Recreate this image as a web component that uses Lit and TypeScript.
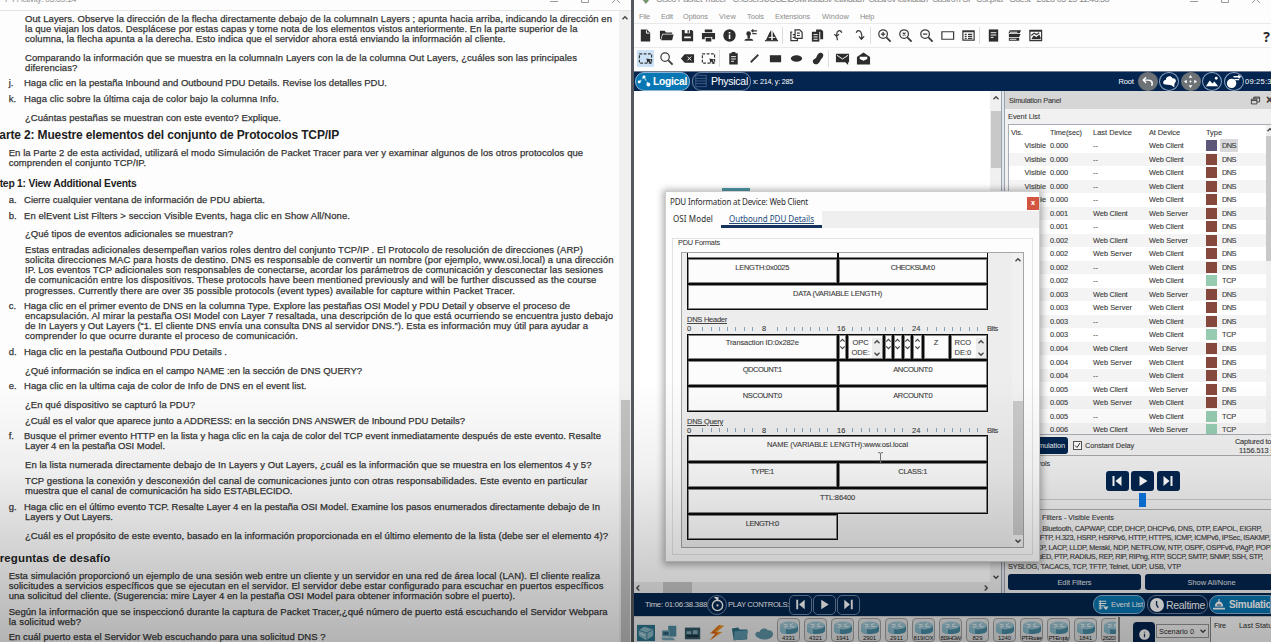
import { LitElement, html, svg, css, nothing } from "lit";
import { customElement, property } from "lit/decorators.js";

/** Single line of text tracked out (or in) to an exact pixel width. */
@customElement("fit-text")
class FitText extends LitElement {
  @property({ type: Number }) w = 0;
  @property() t = "";
  static styles = css`
    :host { display: inline-block; white-space: pre; flex: none; text-decoration: inherit; }
    span { display: inline-block; white-space: pre; text-decoration: inherit; }
  `;
  firstUpdated() {
    const s = this.renderRoot.querySelector("span") as HTMLElement;
    const n = s.getBoundingClientRect().width;
    if (this.w && n) s.style.letterSpacing = (this.w - n) / this.t.length + "px";
  }
  render() { return html`<span>${this.t}</span>`; }
}

const T = (t: string, w: number) => html`<fit-text .t=${t} .w=${w}></fit-text>`;

type Line = { y: number; w: number; t: string; k?: string; l?: string };
const LINES: Line[] = [
  { y: 18.5, w: 587, t: "Out Layers. Observe la dirección de la flecha directamente debajo de la columnaIn Layers ; apunta hacia arriba, indicando la dirección en" },
  { y: 28.7, w: 552.5, t: "la que viajan los datos. Desplácese por estas capas y tome nota de los elementos vistos anteriormente. En la parte superior de la" },
  { y: 38.8, w: 480.5, t: "columna, la flecha apunta a la derecha. Esto indica que el servidor ahora está enviando la información al cliente." },
  { y: 57.7, w: 552, t: "Comparando la información que se muestra en la columnaIn Layers con la de la columna Out Layers, ¿cuáles son las principales" },
  { y: 67.7, w: 52.5, t: "diferencias?" },
  { y: 83.3, w: 363, t: "Haga clic en la pestaña Inbound and Outbound PDU Details. Revise los detalles PDU.", l: "j." },
  { y: 98.8, w: 255, t: "Haga clic sobre la última caja de color bajo la columna Info.", l: "k." },
  { y: 117.6, w: 256, t: "¿Cuántas pestañas se muestran con este evento? Explique." },
  { y: 135, w: 347.5, t: "Parte 2: Muestre elementos del conjunto de Protocolos TCP/IP", k: "h1" },
  { y: 153, w: 574.5, t: "En la Parte 2 de esta actividad, utilizará el modo Simulación de Packet Tracer para ver y examinar algunos de los otros protocolos que", k: "p" },
  { y: 163, w: 137.5, t: "comprenden el conjunto TCP/IP.", k: "p" },
  { y: 184, w: 143.5, t: "Step 1: View Additional Events", k: "h2" },
  { y: 200, w: 241, t: "Cierre cualquier ventana de información de PDU abierta.", l: "a." },
  { y: 215.7, w: 326, t: "En elEvent List Filters > seccion Visible Events, haga clic en Show All/None.", l: "b." },
  { y: 234.5, w: 208, t: "¿Qué tipos de eventos adicionales se muestran?" },
  { y: 249.8, w: 558, t: "Estas entradas adicionales desempeñan varios roles dentro del conjunto TCP/IP . El Protocolo de resolución de direcciones (ARP)" },
  { y: 260, w: 588.5, t: "solicita direcciones MAC para hosts de destino. DNS es responsable de convertir un nombre (por ejemplo, www.osi.local) a una dirección" },
  { y: 270.3, w: 578, t: "IP. Los eventos TCP adicionales son responsables de conectarse, acordar los parámetros de comunicación y desconectar las sesiones" },
  { y: 280.5, w: 571.5, t: "de comunicación entre los dispositivos. These protocols have been mentioned previously and will be further discussed as the course" },
  { y: 290.6, w: 490, t: "progresses. Currently there are over 35 possible protocols (event types) available for capture within Packet Tracer." },
  { y: 306, w: 546, t: "Haga clic en el primer evento de DNS en la columna Type. Explore las pestañas OSI Model y PDU Detail y observe el proceso de", l: "c." },
  { y: 316, w: 588, t: "encapsulación. Al mirar la pestaña OSI Model con Layer 7 resaltada, una descripción de lo que está ocurriendo se encuentra justo debajo" },
  { y: 326.3, w: 563, t: "de In Layers y Out Layers (“1. El cliente DNS envía una consulta DNS al servidor DNS.”). Esta es información muy útil para ayudar a" },
  { y: 336.5, w: 273, t: "comprender lo que ocurre durante el proceso de comunicación." },
  { y: 352, w: 203, t: "Haga clic en la pestaña Outbound PDU Details .", l: "d." },
  { y: 370.7, w: 337, t: "¿Qué información se indica en el campo NAME :en la sección de DNS QUERY?" },
  { y: 386.5, w: 282.5, t: "Haga clic en la ultima caja de color de Info de DNS en el event list.", l: "e." },
  { y: 405.3, w: 170, t: "¿En qué dispositivo se capturó la PDU?" },
  { y: 421, w: 440, t: "¿Cuál es el valor que aparece junto a ADDRESS: en la sección DNS ANSWER de Inbound PDU Details?" },
  { y: 436.5, w: 577, t: "Busque el primer evento HTTP en la lista y haga clic en la caja de color del TCP event inmediatamente después de este evento. Resalte", l: "f." },
  { y: 446.6, w: 140, t: "Layer 4 en la pestaña OSI Model." },
  { y: 465.5, w: 566.5, t: "En la lista numerada directamente debajo de In Layers y Out Layers, ¿cuál es la información que se muestra en los elementos 4 y 5?" },
  { y: 481, w: 562.5, t: "TCP gestiona la conexión y desconexión del canal de comunicaciones junto con otras responsabilidades. Este evento en particular" },
  { y: 491.3, w: 267.5, t: "muestra que el canal de comunicación ha sido ESTABLECIDO." },
  { y: 506.7, w: 576, t: "Haga clic en el último evento TCP. Resalte Layer 4 en la pestaña OSI Model. Examine los pasos enumerados directamente debajo de In", l: "g." },
  { y: 516.9, w: 88, t: "Layers y Out Layers." },
  { y: 535.7, w: 583, t: "¿Cuál es el propósito de este evento, basado en la información proporcionada en el último elemento de la lista (debe ser el elemento 4)?" },
  { y: 558.2, w: 118.5, t: "Preguntas de desafío", k: "h3" },
  { y: 576, w: 591.5, t: "Esta simulación proporcionó un ejemplo de una sesión web entre un cliente y un servidor en una red de área local (LAN). El cliente realiza", k: "p" },
  { y: 586.3, w: 594.8, t: "solicitudes a servicios específicos que se ejecutan en el servidor. El servidor debe estar configurado para escuchar en puertos específicos", k: "p" },
  { y: 596.3, w: 506.5, t: "una solicitud del cliente. (Sugerencia: mire Layer 4 en la pestaña OSI Model para obtener información sobre el puerto).", k: "p" },
  { y: 611.9, w: 599, t: "Según la información que se inspeccionó durante la captura de Packet Tracer,¿qué número de puerto está escuchando el Servidor Webpara", k: "p" },
  { y: 622, w: 72.5, t: "la solicitud web?", k: "p" },
  { y: 637.3, w: 317, t: "En cuál puerto esta el Servidor Web escuchando para una solicitud DNS ?", k: "p" },
];

const EVENTS: [string, string, string, string][] = [
  ["0.000", "", "C", "DNS"], ["0.000", "", "C", "DNS"], ["0.000", "", "C", "DNS"], ["0.000", "", "C", "DNS"], ["0.000", "", "C", "DNS"],
  ["0.001", "C", "S", "DNS"], ["0.001", "", "C", "DNS"],
  ["0.002", "C", "S", "DNS"], ["0.002", "S", "C", "DNS"], ["0.002", "", "C", "DNS"], ["0.002", "", "C", "TCP"],
  ["0.003", "C", "S", "DNS"], ["0.003", "S", "C", "DNS"], ["0.003", "", "C", "DNS"], ["0.003", "", "C", "TCP"],
  ["0.004", "C", "S", "DNS"], ["0.004", "S", "C", "DNS"], ["0.004", "", "C", "DNS"],
  ["0.005", "C", "S", "DNS"], ["0.005", "S", "C", "DNS"], ["0.005", "", "C", "TCP"], ["0.006", "C", "S", "TCP"],
];
const dev = (d: string) => (d === "C" ? T("Web Client", 34.5) : d === "S" ? T("Web Server", 39) : "--");

const ICONS: Record<string, unknown> = {
  file: svg`<path class="f" d="M3 1.5h6.500l3.500 3.500v9.500H3z"/><path class="w" d="M9 2.500v3h3.200"/>`,
  open: svg`<path class="f" d="M1 3h5l1.500 1.800H14V6H3.500L1.800 12H1zM4 6.800h11.500L14 13H2.200z"/>`,
  save: svg`<path class="f" d="M2 2h10.500L14 3.500V14H2z"/><path class="wf" d="M5 2h5.500v3.600H5zM4.500 9h7v2h-7z"/><path class="f" d="M8 2.300h1.500v2.700H8z"/>`,
  print: svg`<path class="f" d="M4 1.500h8v3H4zM1 5.300h14V12h-3V9.500H4V12H1zM5 10.500h6V14.500H5z"/>`,
  info: svg`<circle class="f" cx="8" cy="8" r="6.600"/><path class="wf" d="M7.200 7h1.700v4.600H7.200zM7.200 4.200h1.700v1.700H7.200z"/>`,
  user: svg`<circle class="f" cx="6" cy="6" r="2.500"/><path class="f" d="M1.500 13.500c0-3 9.500-3 9.500 0zM4.800 8h2.600v3H4.800z"/><path class="s" d="M9 3h6M10 6h4.500M11 1.500L9.300 3 11 4.500"/>`,
  wiz: svg`<path class="f" d="M2 13L6 4.500 8 2v11zM9 13V3l4 7 1.500 3z"/><path class="w" d="M8.500 2v11M5 10h7"/><path class="s" d="M1 13.500h14"/>`,
  copy: svg`<path class="s" d="M6.500 2h5l2.500 2.500V11H6.500zM3.500 4.500H2V13.500h7V11M8.500 5.500h3M8.500 8h3M4 7h2M4 10h2"/>`,
  paste: svg`<path class="f" d="M6.500 1.500h5.500l2 2V12H6.500z"/><path class="f" d="M2 4h8v10.500H2z"/><path class="w" d="M3.700 7h4.500M3.700 9.500h4.500M3.700 12h4.500M10.400 4v8"/>`,
  undo: svg`<path class="s" d="M7 14C5.500 10 5.500 5 8 4c2-.6 3 .5 3.500 2M3.500 7.500L6 10l2.500-2.500" transform="translate(0 -1)"/>`,
  redo: svg`<path class="s" d="M10 12C11 9 10.500 4 8 3c-2-.6-3 .5-3.500 2M7.500 9L10 12l3-3"/>`,
  zin: svg`<circle class="s" cx="6.500" cy="6.500" r="4.600"/><path class="s b" d="M10 10l4.500 4.500"/><path class="s" d="M4.200 6.500h4.600M6.500 4.200v4.600"/>`,
  zone: svg`<circle class="s" cx="6.500" cy="6.500" r="4.600"/><path class="s b" d="M10 10l4.500 4.500"/><path class="s" d="M5 5l3 3M8 5L5 8"/>`,
  zout: svg`<circle class="s" cx="6.500" cy="6.500" r="4.600"/><path class="s b" d="M10 10l4.500 4.500"/><path class="s" d="M4.200 6.500h4.600"/>`,
  rect: svg`<path class="s" d="M2 4h12.500v8H2z"/>`,
  panel: svg`<path class="s" d="M2 3h12v10H2zM2 4h12M4 6.800h2M4 9h2M4 11h2M7.500 6.800H12M7.500 9H12M7.500 11H12"/>`,
  note: svg`<path class="f" d="M3 1.500h10v13H3z"/><path class="w" d="M5 5h6M5 7.500h6M5 10h3"/>`,
  stack: svg`<path class="f" d="M3 2.500h12l-1.500 3h-12zM2 6.500h12.500l-1.500 3H2zM2 10.500h11v3H2z"/><path class="w" d="M3 4.500h8M3 12h7"/>`,
  picture: svg`<path class="s" d="M2 2.500h12.500v11H2z"/><path class="f" d="M3.500 12l2.500-4 3 1.500 3-2.500 1.500 3v2zM2 2h12v2H2z"/><path class="s" d="M3.500 8l3-2.500L9 7l3-2"/>`,
  sel: svg`<path class="s d" d="M1.500 3h13v10h-13z"/><path class="f" d="M9 8l5.500 1-2 1.300 2 2.200-1 1-2.200-2.200L10 13z"/>`,
  mag: svg`<circle class="s" cx="6.500" cy="6.500" r="4.500"/><path class="s b" d="M10 10l4.500 4.500"/>`,
  del: svg`<path class="f" d="M1 8l4-4.500h10v9H5z"/><path class="w" d="M8 6l4 4M12 6l-4 4"/>`,
  clip: svg`<path class="f" d="M3.500 2.500h9v12h-9zM6 1h4v2H6z"/><path class="w" d="M5.500 6h5M5.500 8.500h5M5.500 11h3"/>`,
  line: svg`<path class="s b" d="M4 12l8-8"/>`,
  box: svg`<path class="f" d="M2 4.500h12v7.500H2z"/>`,
  oval: svg`<ellipse class="f" cx="8" cy="8" rx="6" ry="3.500"/>`,
  free: svg`<path class="f" d="M3 11c0-3 3-2 4-5s3-5 5.500-4 2 4 0 6-2 5-5 6-4.500-1-4.500-3z"/>`,
  mail: svg`<path class="f" d="M1 3h14v9h-1v3l-3-3H1z"/><path class="w" d="M2 4.500l6 4 6-4"/>`,
  omail: svg`<path class="f" d="M1 6.500L8 1.500l7 5v8H1z"/><path class="wf" d="M4 6h8v2.500L8 10.500 4 8.500z"/>`,
  win: svg`<path class="s" d="M2 6h8v7H2zM2 8h8M5.500 6V3H14v7h-4M5.500 4.500H14"/>`,
  prev: svg`<path class="h" d="M3.500 3h2v10h-2zM12.500 3v10L6.500 8z"/>`,
  play: svg`<path class="h" d="M4.500 3v10L12.500 8z"/>`,
  next: svg`<path class="h" d="M10.500 3h2v10h-2zM3.500 3v10L9.500 8z"/>`,
  back: svg`<path class="o" d="M12.500 12.500c2-5-2-6-4-6H3.500M6.500 3.500l-3 3 3 3"/>`,
  cloud: svg`<path class="h" d="M2 11c-2-3 1-5 2-4.500C4 2 10 1 11 4.500c4-.5 5 4 2.500 5L13 14l-3-2z"/>`,
  move: svg`<path class="h" d="M8 1l2 3H6zM8 15l2-3H6zM1 8l3-2v4zM15 8l-3-2v4z"/><circle class="h" cx="8" cy="8" r="1"/>`,
  mount: svg`<path class="h" d="M1 13l4-6 3 3 2-2 4 5z"/><circle class="h" cx="12" cy="4.500" r="1.500"/>`,
  globe: svg`<circle class="h" cx="6" cy="10" r="5"/><path class="o" d="M8 3h7M9 6h5M13 1.500L15 3l-1.500 1.500"/>`,
  nodes: svg`<circle class="h" cx="2.500" cy="9" r="1.700"/><circle class="h" cx="8" cy="3.500" r="1.700"/><circle class="h" cx="13" cy="12" r="2.200"/><path class="o d" stroke-opacity=".6" d="M3 9l5-5.500 5 8.500"/>`,
  rack: svg`<path class="r" d="M2 1.500h12v13H2zM2 5h12M2 8h12M2 11h12"/>`,
  timer: svg`<circle class="o" cx="8" cy="9" r="5.500"/><circle class="h" cx="8" cy="9" r="1.200"/><path class="h" d="M4 0h5v5z"/>`,
  list: svg`<path class="o" d="M1 3h10M1 6h10M1 9h8M1 12h5M3 2v12"/><path class="h" d="M7 10h7l-2.500 4h-2z"/>`,
  clock: svg`<circle class="h" cx="8" cy="8" r="8"/><path class="n" d="M7.500 3.500V8l2 3"/>`,
  sim: svg`<path class="h" d="M2.500 10c0-9 11-9 11 0zM0 11.500h16V14H0z"/><path class="o" d="M8 0v4"/><path class="n" d="M5.500 8h5"/>`,
  dinfo: svg`<circle class="h" cx="8" cy="8" r="6.500"/><path class="n" d="M8 4.500v1M8 7v4.500"/>`,
};
const ic = (n: string, c = "") => html`<svg class="ic ${c}" viewBox="0 0 16 16">${ICONS[n]}</svg>`;

const chev = (d: string) => html`<svg class="chev ${d}" viewBox="0 0 8 8"><path d="M1.500 5.300L4 2.700l2.500 2.600"/></svg>`;

const router = html`<svg class="router" viewBox="0 0 20 14">
  <path d="M1 4.500v5c0 4.800 18 4.800 18 0v-5z" fill="#4a8fa9"/>
  <path d="M1 4.500v5c0 2 3 3.300 6 3.600V6z" fill="#8cc0d1"/>
  <ellipse cx="10" cy="4.500" rx="9" ry="3.900" fill="#9cc6d4"/>
  <path d="M4.500 3l4 1M11 5l4.500 1M11 4l3-1.500M5 6.300l3.500-1.200" stroke="#eef7fa" stroke-width="1" fill="none"/></svg>`;
const ROUTERS = ["4331", "4321", "1941", "2901", "2911", "819IOX", "819HGW", "829", "1240", "PT-Router", "PT-Empty", "1841", "2620XM"];

const CATS = [
  svg`<path d="M0 0h20v18H0z" fill="#2f7690"/><path d="M2 6l6-4 10 3v7l-8 5-8-5z" fill="#8dbdcb"/><path d="M2 6l9 3 7-4M11 9v8" stroke="#3d7f97" fill="none"/><path d="M3 9l6 3" stroke="#d6eaf0"/>`,
  svg`<path d="M8 1h9v12H8z" fill="#4e8ea4"/><path d="M1 6h9v7H1zM0 14h13l3 3H2z" fill="#76a9ba"/><path d="M2.500 7.500h6v4h-6z" fill="#2e667c"/>`,
  svg`<path d="M1 3h17v13H1z" fill="#315b6b"/><path d="M3 7h5v3H3zM10 6h5v4h-5z" fill="#86adb9"/><path d="M3 12.500h13" stroke="#19323c" stroke-width="2"/>`,
  svg`<path d="M12 0L2 9.500l6 .3L1 18l15-10-6-.5L18 1z" fill="#f0941e"/><path d="M13 1L5 8.500l5 .6L5 15" stroke="#e0402b" fill="none"/>`,
  svg`<path d="M1 4l7-1 1.500 2H18v11L3 17z" fill="#2f7188"/><path d="M4 7l15-1-2 10-14 1z" fill="#5e9bb0"/>`,
  svg`<path d="M3 14c-5-2-2-8 2-6 1-5 8-5 9-2 6-1 8 5 4 8-4 3-11 3-15 0z" fill="#5f97ab"/>`,
];

const ruler = html`<div class="ruler">${[0, 8, 16, 24].map((n) => html`<div class="oct"><b>${n}</b>${[1, 2, 3, 4, 5, 6, 7].map(() => html`<i></i>`)}</div>`)}<span>${T("Bits", 11)}</span></div>`;
const spin = html`<span class="spin">${chev("up")}${chev("dn")}</span>`;
const two = (a: string, wa: number, b: string, wb: number) => html`<div class="prow two"><div>${T(a, wa)}</div><div>${T(b, wb)}</div></div>`;
const one = (a: string, w: number) => html`<div class="prow"><div>${T(a, w)}</div></div>`;

@customElement("app-root")
class AppRoot extends LitElement {
  static styles = css`
    :host { display: block; width: 1271px; height: 642px; position: relative; overflow: hidden; background: #fdfdfd;
      font-family: "Liberation Sans", Arial, sans-serif; color: #2c2c2c; }
    * { box-sizing: border-box; }
    .frame { display: grid; grid-template-columns: 631px 640px; height: 642px; }
    .shade { position: absolute; inset: 0; pointer-events: none;
      background: linear-gradient(to bottom, rgba(0,0,0,0) 380px, rgba(0,0,0,.06) 470px, rgba(0,0,0,.18) 560px, rgba(0,0,0,.29) 642px); }
    .ic { width: 16px; height: 16px; flex: none; display: block; overflow: visible; }
    .f { fill: #2d2d2d; } .s { fill: none; stroke: #383838; stroke-width: 1.3; } .b { stroke-width: 1.9; } .d { stroke-dasharray: 3 1.600; }
    .w { fill: none; stroke: #fff; stroke-width: 1; } .wf { fill: #fff; }
    .h { fill: #fff; } .o { fill: none; stroke: #fff; stroke-width: 1.500; } .n { stroke: #17365e; fill: none; stroke-width: 1.600; } .r { stroke: #42618c; fill: none; stroke-width: 1; }
    .chev { width: 8px; height: 8px; display: block; flex: none; } .chev path { fill: none; stroke: #444; stroke-width: 1.3; }
    .dn { transform: rotate(180deg); } .lt { transform: rotate(-90deg); } .rt { transform: rotate(90deg); }

    .doc { display: grid; grid-template-rows: 11px 1fr; height: 642px; overflow: hidden; }
    .dtitle { border-bottom: 1px solid #e4e4e4; display: flex; justify-content: space-between; overflow: hidden; height: 11px;
      font-size: 9px; line-height: 9px; color: #989898; padding-left: 5px; }
    .dtitle fit-text { margin-top: -5px; }
    .wbtn { display: flex; gap: 23px; margin-top: -5px; padding-right: 11px; }
    .wbtn svg { width: 8px; height: 8px; fill: none; stroke: #9a9a9a; }
    .dbody { display: grid; grid-template-columns: 619px 12px; overflow: hidden; height: 631px; }
    .text { overflow: hidden; font-size: 9.500px; -webkit-text-stroke: .25px #383838; padding-top: 2.500px; color: #333; }
    .ln { height: 10px; line-height: 10px; white-space: pre; padding-left: 25px; display: flex; }
    .ln.p { padding-left: 8.700px; } .ln.li { padding-left: 8.700px; }
    .ln .lab { width: 15.300px; flex: none; }
    .ln.h1 { padding-left: 0; margin-left: -8.500px; font-weight: bold; font-size: 12px; -webkit-text-stroke: 0; color: #1e1e1e; }
    .ln.h2 { padding-left: 0; margin-left: -7px; font-weight: bold; font-size: 10.300px; -webkit-text-stroke: 0; color: #1e1e1e; }
    .ln.h3 { padding-left: 0; margin-left: -8px; font-weight: bold; font-size: 11.500px; -webkit-text-stroke: 0; color: #222; }
    .dscroll { background: #f0f0f0; display: flex; flex-direction: column; justify-content: space-between; align-items: center; padding-top: 3px; }
    .dscroll i { width: 9px; height: 242px; background: #c2c2c2; }

    .pt { display: grid; grid-template-rows: 11px 12px 24px 23.500px 20.500px 502px 23px 26px; border-left: 3px solid #55585e; height: 642px; overflow: hidden; width: 640px; }
    .ptitle { display: flex; font-size: 9px; line-height: 9px; color: #8b8b8b; overflow: hidden; padding-left: 7px; height: 11px; justify-content: space-between; }
    .ptitle .a { display: flex; gap: 7px; margin-top: -5px; }
    .ptitle .a i { width: 8px; height: 9px; background: #75966f; clip-path: polygon(0 30%, 100% 60%, 60% 100%); }
    .menu { display: flex; font-size: 7.400px; line-height: 12px; color: #8c8c8c; padding-left: 5px; }
    .menu span { display: block; flex: none; }
    .tools { display: flex; align-items: center; border-top: 1px solid #e9e9e9; padding-left: .5px; padding-bottom: 1px; }
    .tools > span { width: 21px; height: 17px; display: grid; place-items: center; flex: none; }
    .tools .ic { width: 15px; height: 15px; }
    .tools > i { width: 4px; height: 17px; border-left: 1px solid #ddd; margin-right: 0; }
    .tools .on { background: #cce2f6; width: 17px; margin: 0 2px; }
    .tools .q { margin-left: auto; font: bold 14px "Noto Sans", sans-serif; width: 9px; }
    .nav { background: #03254f; display: flex; align-items: center; color: #fff; padding-left: 1px; border-top: 1px solid #6e7d92; }
    .pill { height: 18.500px; border-radius: 9px; border: 1px solid #8fb4d6; display: flex; align-items: center; flex: none; font-weight: bold; }
    .logical { background: #0877b3; width: 55px; margin-right: 2px; font-size: 10.300px; padding-left: 1px; gap: 2px; }
    .logical .ic, .phys .ic { width: 14px; height: 14px; }
    .phys { width: 59px; font-size: 10.500px; padding-left: 1px; gap: 3px; font-weight: normal; border-color: #7389a9; }
    .xy { font-size: 7.200px; margin-left: 2px; }
    .root { font-size: 7.500px; margin-left: auto; margin-right: 4px; }
    .nav .c { width: 20px; height: 19px; border-radius: 50%; border: 1px solid #8ea7c6; display: grid; place-items: center; margin-right: 1.500px; flex: none; }
    .nav .c.g { background: #6d7277; border-color: #6d7277; }
    .nav .c .ic { width: 15px; height: 15px; }
    .tm { font-size: 7.500px; width: 26px; overflow: hidden; }

    .mid { display: grid; grid-template-columns: 356px 11px 4px 266px; height: 502px; overflow: hidden; }
    .ws { display: flex; flex-direction: column; justify-content: space-between; background: #fff; }
    .link { width: 28px; height: 3px; background: #4f99a8; margin: 97px 0 0 88px; }
    .hs { height: 11px; background: #ededed; display: flex; align-items: center; }
    .hs i { width: 29px; height: 11px; background: #c6c6c6; margin-left: 21px; }
    .hs .rt { margin-left: auto; }
    .vs { background: #f0f0f0; display: flex; flex-direction: column; align-items: center; padding-top: 3px; }
    .vs i { width: 10px; height: 57px; background: #c8c8c8; margin-top: 9px; }
    .vs .dn { margin-top: auto; margin-bottom: 12px; }
    .split { border-left: 1px solid #9aa5b3; border-right: 1px solid #9aa5b3; background: #e4e6e8; }
    .sim { background: #f1f1f1; display: flex; flex-direction: column; font-size: 7.400px; -webkit-text-stroke: .12px #444; overflow: hidden; width: 266px; color: #3a3a3a; }
    .sh { height: 18px; background: #d6d6d6; display: flex; align-items: center; padding-left: 4px; flex: none; }
    .sh .ic { width: 11px; height: 11px; margin-left: auto; margin-right: 5px; }
    .sh b { font-size: 12px; width: 5px; overflow: hidden; }
    .eh { height: 15px; line-height: 16px; padding-left: 3px; flex: none; }
    .tbl { height: 311px; border: 1px solid #a6adb5; border-right: 0; margin-left: 3px; background: #fff; display: grid; grid-template-columns: 257px 6px; overflow: hidden; flex: none; }
    .er { display: grid; grid-template-columns: 41px 43px 56px 57px 14px 46px; height: 13.530px; align-items: center; white-space: pre; }
    .er:nth-child(odd) { background: #f4f4f4; }
    .er.hd { height: 14px; background: #fff; }
    .er.hd > span:first-child { text-align: left; padding-left: 2px; }
    .er > span:first-child { text-align: right; padding-right: 4px; }
    .sq { width: 11px; height: 11px; background: #85483c; } .sq.tcp { background: #96cbb1; } .sq.sel { background: #5d5877; }
    .ty { width: 18px; padding-left: 2px; height: 13px; line-height: 13px; } .ty.sel { background: #d9d9dc; }
    .tsb { background: #f0f0f0; overflow: hidden; padding-top: 1px; } .tsb i { display: block; height: 125px; background: #c9c9c9; margin-top: 2px; }
    .rs { height: 21px; display: flex; align-items: center; flex: none; border-bottom: 1px solid #a9a9a9; padding-left: 3px; }
    .btn { background: #03254f; color: #e5e9ee; border-radius: 3px; display: grid; place-items: center; -webkit-text-stroke: 0; }
    .rsb { width: 60px; height: 17px; margin-right: 5px; }
    .ck { width: 9px; height: 9px; border: 1px solid #555; background: #fff; margin-right: 3px; }
    .ck svg { display: block; width: 7px; height: 7px; }
    .cap { margin-left: auto; width: 36px; line-height: 9px; white-space: pre; padding-top: 1px; }
    .cap div:last-child { padding-left: 4px; }
    .pc { height: 54px; border-bottom: 1px solid #a9a9a9; flex: none; }
    .pc .cl { height: 15px; line-height: 16px; padding-left: 3px; }
    .pb { display: flex; gap: 2.500px; padding-left: 100.500px; }
    .pb .btn { width: 23px; height: 20px; }
    .sl { height: 14px; margin-top: 2px; padding-left: 134px; background: linear-gradient(#c9c9c9, #c9c9c9) 0 6px / 100% 1px no-repeat; }
    .sl i { display: block; width: 7px; height: 14px; background: #0a78e4; }
    .fl { padding: 3px 0 0 3px; flex: none; height: 64px; font-size: 7.300px; }
    .fl div { height: 9.500px; line-height: 9.500px; white-space: pre; }
    .fl .ft { height: 10.500px; }
    .fb { display: flex; gap: 4px; padding-left: 3px; }
    .fb .btn { height: 16px; width: 133px; flex: none; }

    .bar { background: #03254f; display: flex; align-items: center; color: #fff; padding-left: 11px; font-size: 7.700px; }
    .bar .ti { width: 20px; height: 20px; border: 1px solid #6d86a8; border-radius: 50%; display: grid; place-items: center; margin: 0 1px 0 0; flex: none; }
    .bar .sqb { width: 23px; height: 20px; border: 1px solid #6d86a8; border-radius: 5px; display: grid; place-items: center; margin-right: 1px; flex: none; }
    .bar .sqb .ic, .bar .ti .ic { width: 15px; height: 15px; }
    .evl { margin-left: auto; background: #0877b3; width: 52px; font-weight: normal; gap: 1px; padding-left: 4px; margin-right: 2px; }
    .evl .ic, .rt2 .ic, .sm .ic { width: 12px; height: 12px; }
    .rt2 { width: 61px; gap: 2px; padding-left: 2px; font-weight: normal; font-size: 10.500px; margin-right: 1px; border-color: #6d86a8; }
    .rt2 .ic { width: 14px; height: 14px; }
    .sm { width: 62px; background: #0877b3; font-size: 10px; gap: 4px; padding-left: 3px; border-radius: 9px 0 0 9px; overflow: hidden; }

    .dev { background: #f1f1f1; display: flex; overflow: hidden; width: 637px; border-top: 1px solid #ccc; }
    .cats { display: flex; gap: 5.500px; padding: 7px 0 0 3px; width: 142px; flex: none; }
    .cats svg { width: 18px; height: 18px; flex: none; display: block; }
    .rts { display: flex; gap: 4px; width: 340px; overflow: hidden; padding: 1px 0 0 1px; flex: none; }
    .tile { width: 23px; height: 24px; border: 1px solid #a3a3a3; border-radius: 4px; background: #e4e6e7; display: flex; flex-direction: column; align-items: center; flex: none; padding-top: 2px; font-size: 6px; line-height: 6px; overflow: hidden; color: #222; }
    .router { width: 20px; height: 14px; display: block; flex: none; }
    .scn { margin-left: 2px; border-left: 2px solid #888; width: 93px; display: flex; padding: 5px 0 0 13px; flex: none; border-right: 1px solid #888; }
    .scn .btn { width: 22px; height: 24px; border-radius: 4px; }
    .scn .ic { width: 13px; height: 13px; }
    .dd { margin: 2px 0 0 1px; width: 53px; height: 14px; border: 1px solid #999; background: #f6f6f6; display: flex; align-items: center; justify-content: space-between; font-size: 7.300px; padding: 0 1px 0 2px; }
    .fs { font-size: 7.300px; display: flex; gap: 13px; padding: 4px 0 0 3px; background: #fff; flex: 1; white-space: pre; line-height: 9px; }

    .dlg { position: absolute; left: 665px; top: 191px; width: 375px; height: 371px; background: #fdfdfd; border: 1px solid #cfcfcf; box-shadow: 0 1px 7px 2px rgba(0,0,0,.33);
      display: flex; flex-direction: column; font-family: "Liberation Sans", Arial, sans-serif; }
    .dt { height: 19px; display: flex; align-items: center; justify-content: space-between; padding: 0 0 0 4px; font: 8px "Noto Sans", sans-serif; flex: none; }
    .dt i { font: bold 7px/11px "Noto Sans", sans-serif; color: #fff; background: #d3543f; width: 12px; height: 13px; text-align: center; margin-top: 3px; }
    .tabs { display: grid; grid-template-columns: 55px 101px 1fr; height: 17px; font: 8px/16px "Noto Sans", sans-serif; flex: none; }
    .tabs div:first-child { padding-left: 7px; }
    .tabs .act { color: #244a7c; border-bottom: 3px solid #14345d; padding-left: 8px; line-height: 16px; text-decoration: underline; text-decoration-thickness: 1px; height: 17px; }
    .tabs .fill { background: #efefef; }
    .grp { margin: 10px 6px 7px; flex: 1; border: 1px solid #e2e2e2; padding: 0 8px 6px; display: flex; flex-direction: column; }
    .gt { font-size: 7.300px; line-height: 8px; height: 13px; flex: none; }
    .gt fit-text { margin-top: -4px; margin-left: -3px; background: #fdfdfd; }
    .pf { flex: 1; border: 1px solid #a5a5a5; background: #ededed; display: grid; grid-template-columns: 1fr 11px; overflow: hidden; height: 296px; }
    .fl2 { padding-left: 5px; font-size: 7.500px; overflow: hidden; height: 294px; -webkit-text-stroke: .1px #444; color: #3a3a3a; }
    .prow { display: grid; height: 26.200px; width: 301px; }
    .prow > div { border: 1px solid #0b0b0b; box-shadow: inset 0 0 0 1px rgba(11,11,11,.5); background: #fcfcfc; text-align: center; line-height: 8px; padding-top: 5px; overflow: hidden; }
    .two { grid-template-columns: 150.500px 150.500px; }
    .cut { height: 5px; } .cut > div { border-top: 0; box-shadow: inset 0 -1px 0 0 rgba(11,11,11,.5); }
    .half { width: 150.500px; }
    .sec { text-decoration: underline; height: 9px; line-height: 9px; margin-top: 4.500px; }
    .ruler { display: flex; height: 9.700px; align-items: center; width: 330px; }
    .oct { width: 75px; display: flex; align-items: center; justify-content: space-between; padding-right: 9px; }
    .oct b { font-weight: normal; width: 8px; } .oct i { width: 1px; height: 4px; background: #8aa0b4; }
    .bits { grid-template-columns: 150.500px 9px 37px 9.500px 9.500px 9.500px 10.500px 27px 38.500px; }
    .bits > div { line-height: 10px; padding-top: 3px; }
    .bits .sc { padding: 2px 0 0; display: flex; flex-direction: column; align-items: center; }
    .sc .chev { width: 7px; height: 7px; }
    .bits .x { display: flex; justify-content: space-between; padding-left: 4px; padding-right: 1px; }
    .spin { background: #ececec; display: flex; flex-direction: column; justify-content: space-between; height: 20px; width: 10px; align-items: center; }
    .psb { background: #f0f0f0; display: flex; flex-direction: column; align-items: center; justify-content: space-between; padding: 3px 0 2px; }
    .psb i { height: 134px; width: 10px; background: #c9c9c9; margin-top: auto; margin-bottom: 2px; }
    .cur { position: absolute; left: 877px; top: 452px; width: 7px; height: 12px; }
  `;

  private doc() {
    let prev = 13.500;
    return LINES.map((l) => {
      const top = l.y - 5;
      const m = top - prev;
      prev = top + 10;
      return html`<div class="ln ${l.k ?? ""} ${l.l ? "li" : ""}" style="margin-top:${m.toFixed(2)}px">${l.l ? html`<span class="lab">${l.l}</span>` : nothing}${T(l.t, l.w)}</div>`;
    });
  }

  private tools(names: string[], on = "") {
    return names.map((n) => (n === "|" ? html`<i></i>` : html`<span class=${n === on ? "on" : ""}>${ic(n)}</span>`));
  }

  render() {
    const wb = html`<div class="wbtn"><svg viewBox="0 0 8 8"><path d="M0 6.500h8"/></svg><svg viewBox="0 0 8 8"><path d="M.5.5h7v7h-7z"/></svg><svg viewBox="0 0 8 8"><path d="M0 0l8 8M8 0L0 8"/></svg></div>`;
    return html`
      <div class="frame">
        <section class="doc">
          <div class="dtitle">${T("PT Activity: 05:39:14", 71)}${wb}</div>
          <div class="dbody"><div class="text">${this.doc()}</div><div class="dscroll">${chev("up")}<i></i></div></div>
        </section>
        <section class="pt">
          <div class="ptitle"><div class="a"><i></i>${T("Cisco Packet Tracer - C:\\Users\\JOSE\\Downloads\\Actividad7-Castro\\Actividad7-Castro\\TCP-Osi.pka - Guest - 2023-05-29 11:46:53", 453)}</div>${wb}</div>
          <div class="menu">${([["File", 22, 11], ["Edit", 22, 12], ["Options", 36, 25], ["View", 28, 17], ["Tools", 28, 17], ["Extensions", 47, 35], ["Window", 38, 27], ["Help", 20, 14]] as [string, number, number][]).map(([t, c, w]) => html`<span style="width:${c}px">${T(t, w)}</span>`)}</div>
          <div class="tools">${this.tools(["file", "open", "save", "print", "info", "user", "wiz", "|", "copy", "paste", "undo", "redo", "|", "zin", "zone", "zout", "rect", "panel", "|", "note", "stack", "picture"])}<span class="q">?</span></div>
          <div class="tools">${this.tools(["sel", "mag", "del", "sel2", "|", "clip", "line", "box", "oval", "free", "|", "mail", "omail"], "sel")}</div>
          <div class="nav">
            <div class="pill logical">${ic("nodes")}${T("Logical", 34)}</div>
            <div class="pill phys">${ic("rack")}${T("Physical", 37)}</div>
            <div class="xy">${T("x: 214, y: 285", 40)}</div>
            <div class="root">${T("Root", 15)}</div>
            <div class="c g">${ic("back")}</div><div class="c">${ic("cloud")}</div><div class="c g">${ic("move")}</div><div class="c">${ic("mount")}</div><div class="c">${ic("globe")}</div>
            <div class="tm">${T("09:25:30", 31)}</div>
          </div>
          <div class="mid">
            <div class="ws"><div class="link"></div><div class="hs">${chev("lt")}<i></i>${chev("rt")}</div></div>
            <div class="vs">${chev("up")}<i></i>${chev("dn")}</div>
            <div class="split"></div>
            <div class="sim">
              <div class="sh">${T("Simulation Panel", 52)}${ic("win")}<b>×</b></div>
              <div class="eh">${T("Event List", 32)}</div>
              <div class="tbl">
                <div>
                  <div class="er hd"><span>${T("Vis.", 12)}</span><span>${T("Time(sec)", 32)}</span><span>${T("Last Device", 39)}</span><span>${T("At Device", 31)}</span><span>${T("Type", 16)}</span></div>
                  ${EVENTS.map(([t, a, b, k], i) => html`<div class="er"><span>${i < 5 ? T("Visible", 21.500) : nothing}</span><span>${T(t, 18)}</span><span>${dev(a)}</span><span>${dev(b)}</span><span class="sq ${k === "TCP" ? "tcp" : i === 0 ? "sel" : ""}"></span><span class="ty ${i === 0 ? "sel" : ""}">${T(k, 14)}</span></div>`)}
                </div>
                <div class="tsb">${chev("up")}<i></i></div>
              </div>
              <div class="rs"><div class="btn rsb">${T("Reset Simulation", 54)}</div><div class="ck"><svg viewBox="0 0 7 7"><path d="M1 3.500l2 2 3-4.500" fill="none" stroke="#333"/></svg></div>${T("Constant Delay", 49)}
                <div class="cap"><div>${T("Captured to:", 38)}</div><div>${T("1156.513 s", 35)}</div></div></div>
              <div class="pc"><div class="cl">${T("Play Controls", 42)}</div>
                <div class="pb"><div class="btn">${ic("prev")}</div><div class="btn">${ic("play")}</div><div class="btn">${ic("next")}</div></div>
                <div class="sl"><i></i></div></div>
              <div class="fl">
                <div class="ft">${T("Event List Filters - Visible Events", 106)}</div>
                <div>${T("ARP, BGP, Bluetooth, CAPWAP, CDP, DHCP, DHCPv6, DNS, DTP, EAPOL, EIGRP,", 254)}</div>
                <div>${T("EIGRPv6, FTP, H.323, HSRP, HSRPv6, HTTP, HTTPS, ICMP, ICMPv6, IPSec, ISAKMP,", 262)}</div>
                <div>${T("IoT, IoT TCP, LACP, LLDP, Meraki, NDP, NETFLOW, NTP, OSPF, OSPFv6, PAgP, POP3,", 268)}</div>
                <div>${T("PPP, PPPoED, PTP, RADIUS, REP, RIP, RIPng, RTP, SCCP, SMTP, SNMP, SSH, STP,", 255)}</div>
                <div>${T("SYSLOG, TACACS, TCP, TFTP, Telnet, UDP, USB, VTP", 173)}</div>
              </div>
              <div class="fb"><div class="btn">${T("Edit Filters", 34)}</div><div class="btn">${T("Show All/None", 48)}</div></div>
            </div>
          </div>
          <div class="bar">${T("Time: 01:06:38.388", 62)}<div class="ti">${ic("timer")}</div>${T("PLAY CONTROLS:", 61)}
            <div class="sqb">${ic("prev")}</div><div class="sqb">${ic("play")}</div><div class="sqb">${ic("next")}</div>
            <div class="pill evl">${ic("list")}${T("Event List", 32)}</div><div class="pill rt2">${ic("clock")}${T("Realtime", 39)}</div><div class="pill sm">${ic("sim")}${T("Simulation", 48)}</div></div>
          <div class="dev">
            <div class="cats">${CATS.map((c) => html`<svg viewBox="0 0 20 18">${c}</svg>`)}</div>
            <div class="rts">${ROUTERS.map((r) => html`<div class="tile">${router}${T(r, r.length > 4 ? 20 : r.length === 3 ? 10 : 13)}</div>`)}</div>
            <div class="scn"><div class="btn">${ic("dinfo")}</div><div class="dd">${T("Scenario 0", 35)}${chev("dn")}</div></div>
            <div class="fs">${T("Fire", 12)}${T("Last Status", 37)}</div>
          </div>
        </section>
      </div>
      <div class="dlg">
        <div class="dt">${T("PDU Information at Device: Web Client", 138)}<i>x</i></div>
        <div class="tabs"><div>${T("OSI Model", 40)}</div><div class="act">${T("Outbound PDU Details", 85)}</div><div class="fill"></div></div>
        <div class="grp">
          <div class="gt">${T("PDU Formats", 42)}</div>
          <div class="pf">
            <div class="fl2">
              <div class="prow two cut"><div></div><div></div></div>
              ${two("LENGTH:0x0025", 54, "CHECKSUM:0", 44)}
              ${one("DATA (VARIABLE LENGTH)", 89)}
              <div class="sec">${T("DNS Header", 40)}</div>
              ${ruler}
              <div class="prow bits"><div>${T("Transaction ID:0x282e", 73)}</div><div class="sc">${chev("up")}${chev("dn")}</div>
                <div class="x"><span>OPC<br>ODE:</span>${spin}</div>
                ${[1, 2, 3, 4].map(() => html`<div class="sc">${chev("up")}${chev("dn")}</div>`)}
                <div>Z</div><div class="x"><span>RCO<br>DE:0</span>${spin}</div></div>
              ${two("QDCOUNT:1", 39, "ANCOUNT:0", 39)}
              ${two("NSCOUNT:0", 39, "ARCOUNT:0", 39)}
              <div class="sec">${T("DNS Query", 36)}</div>
              ${ruler}
              ${one("NAME (VARIABLE LENGTH):www.osi.local", 141)}
              ${two("TYPE:1", 23, "CLASS:1", 29)}
              ${one("TTL:86400", 35)}
              <div class="prow half"><div>${T("LENGTH:0", 33)}</div></div>
            </div>
            <div class="psb">${chev("up")}<i></i>${chev("dn")}</div>
          </div>
        </div>
      </div>
      <svg class="cur" viewBox="0 0 7 12"><path d="M1 .7h2l.5.5.5-.5h2M3.500 1v10M1.500 11.300h4" fill="none" stroke="#777"/></svg>
      <div class="shade"></div>`;
  }
}

ICONS.sel2 = ICONS.sel;
